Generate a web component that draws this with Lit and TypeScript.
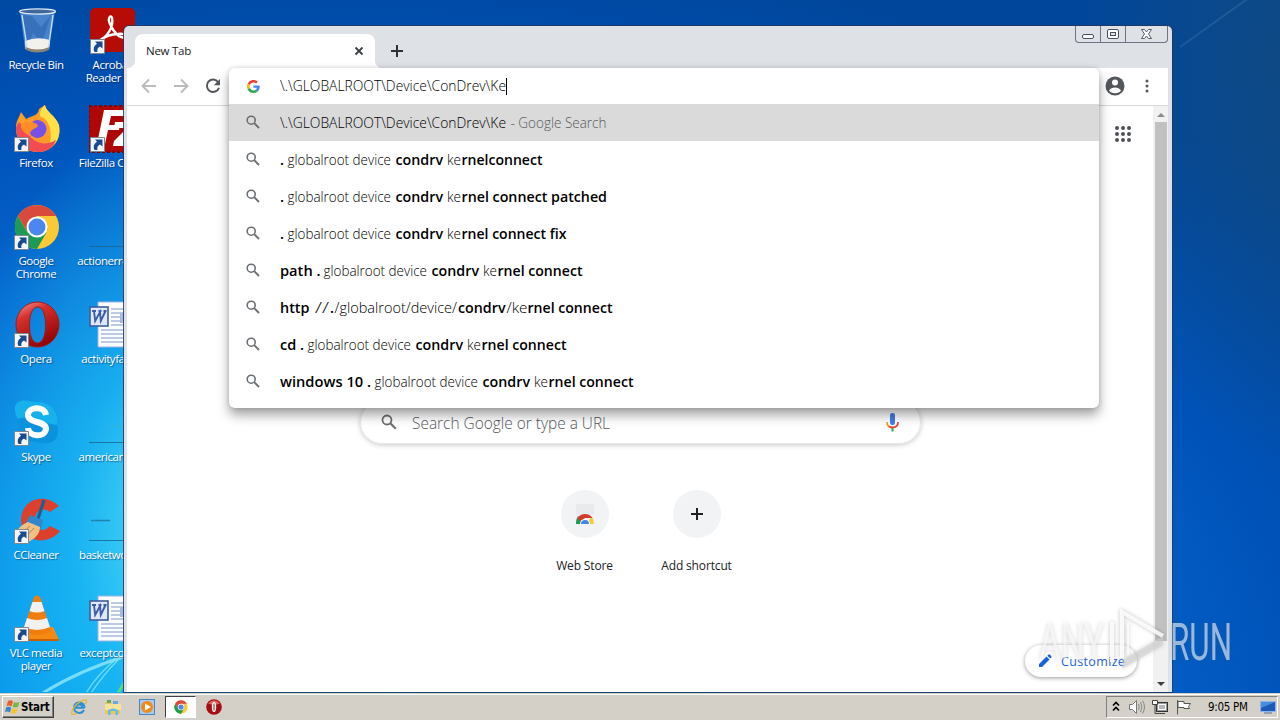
import { LitElement, html, css, svg, nothing } from 'lit'

type Part = { t: string; x: number; w: number; kind?: 'bold' | 'dim' }

// "globalroot device condrv ke…" is shared by most of the suggestions
const query = (x: number, tail: string, w: number): Part[] => [
  { t: 'globalroot device', x, w: 103.5 },
  { t: 'condrv', x: x + 108, w: 47.5, kind: 'bold' },
  { t: 'ke', x: x + 159.5, w: 14 },
  { t: tail, x: x + 174, w, kind: 'bold' },
]

const dot: Part = { t: '.', x: 0, w: 4, kind: 'bold' }

const typed = '\\.\\GLOBALROOT\\Device\\ConDrev\\Ke'

const suggestions: Part[][] = [
  [
    { t: typed, x: 0, w: 226 },
    { t: '- Google Search', x: 230.5, w: 96, kind: 'dim' },
  ],
  [dot, ...query(7.5, 'rnelconnect', 81)],
  [dot, ...query(7.5, 'rnel connect patched', 145.5)],
  [dot, ...query(7.5, 'rnel connect fix', 105)],
  [{ t: 'path .', x: 0, w: 40.5, kind: 'bold' }, ...query(43.5, 'rnel connect', 85)],
  [
    { t: 'http', x: 0, w: 29.5, kind: 'bold' },
    { t: '//', x: 35, w: 14 },
    { t: '.', x: 50, w: 4, kind: 'bold' },
    { t: '/globalroot/device/', x: 54.5, w: 122.5 },
    { t: 'condrv', x: 178, w: 47.5, kind: 'bold' },
    { t: '/ke', x: 226.5, w: 21 },
    { t: 'rnel connect', x: 247.5, w: 85, kind: 'bold' },
  ],
  [{ t: 'cd .', x: 0, w: 24, kind: 'bold' }, ...query(27.5, 'rnel connect', 85)],
  [{ t: 'windows 10 .', x: 0, w: 91, kind: 'bold' }, ...query(94.5, 'rnel connect', 85)],
]

const magnifier = html`<svg class="magnifier" viewBox="0 0 16 16">
  <circle cx="6.2" cy="6.2" r="4" fill="none" stroke="#6b6f73" stroke-width="1.6" />
  <path d="M9.2 9.2 14 14" stroke="#6b6f73" stroke-width="1.9" />
</svg>`

const chromeShape = svg`
  <circle cx="24" cy="24" r="22" fill="#fbc934" />
  <path d="M24 13H43.1A22 22 0 0 0 4.9 13L14.5 29z" fill="#d94a3d" />
  <path d="M4.9 13A22 22 0 0 0 24 46L33.5 29.5 24 33 14.5 29.5z" fill="#1d9b55" />
  <circle cx="24" cy="24" r="10.5" fill="#fff" />
  <circle cx="24" cy="24" r="8.5" fill="#4b87ee" />`

const wordShape = svg`
  <path d="M9 1H48V46H9z" fill="#fafcff" stroke="#9db4dc" />
  <path d="M22 8H46M22 12H46M22 16H46M22 20H46M22 24H46M12 29H46M12 33H46M12 37H46M12 41H46" stroke="#7f97cc" stroke-width="1.2" />
  <path d="M31 12h14v10H31z" fill="#aab9dd" />
  <rect x="1" y="6" width="18" height="19" fill="#dfe8f8" stroke="#3d5d9e" stroke-width="1.6" />
  <path d="M3 10h4M9.500 10h3M14.500 10h3M5 10l1.200 10L11 11l.8 9L16.500 10" fill="none" stroke="#3b5ca8" stroke-width="1.900" />`

const thumbLine = svg`<path d="M0 43.500H48" stroke="#17658f" opacity=".8" />`

const shapes: Record<string, unknown> = {
  bin: svg`
    <path d="M7 4 12 42Q24 47 36 42L42 4z" fill="#6fa3dc" opacity=".65" />
    <path d="M10 8 15 38 20 26 29 36 38 8 28 20 19 9z" fill="#255ca9" opacity=".45" />
    <path d="M12 34Q24 29 37 33L36 42Q24 47 12.500 42z" fill="#f3f1ec" />
    <path d="M12.500 40Q24 45 36.500 40L36 43Q24 48 13 43z" fill="#8b8476" />
    <ellipse cx="24.500" cy="4.500" rx="18" ry="2.600" fill="#41689b" stroke="#dce9f5" stroke-width="1.3" />
    <path d="M9 8 14 40M40 8 35.500 40" stroke="#c5e0f5" stroke-width="1.3" />`,
  acrobat: svg`
    <rect x="1" y="1" width="45" height="44" rx="5" fill="#b70c06" />
    <path d="M10 34C18 30 25 20 23 11c-1-4-5 0-2 6 4 9 10 14 16 14 4-1-1-5-8-4-7 0-14 3-19 7z" fill="none" stroke="#fff" stroke-width="2.400" />`,
  firefox: svg`
    <path d="M3 22C3 16 6 13 8 7L13 14C20 10 25 11 26 4L32 0C33 7 42 10 46 20 49 36 38 47 25 47 11 47 3 37 3 22z" fill="#ff9b28" />
    <path d="M32 0C33 7 42 10 46 20 48 32 43 40 36 43 40 29 37 14 28 12 25 8 29 3 32 0z" fill="#ffe047" />
    <path d="M3 22C3 36 12 47 25 47 35 47 41 41 43 35 32 42 19 38 14 26L6 17z" fill="#f24b53" />
    <circle cx="24.500" cy="24" r="9" fill="#7750e6" />
    <path d="M8 19C16 15 21 17 25 20 25 24 16 23 17 31 10 28 7 23 8 19z" fill="#ff8d26" />`,
  filezilla: svg`
    <rect x="0" y="1" width="50" height="46" fill="#ae0705" stroke="#7d0806" stroke-width="2" stroke-dasharray="3 2" />
    <path d="M15 5H36L35 11H22L20 20H31L30 25H19L16 39H8zM26 17H48L46 22 34 35H46L45 41H24L25 36 38 23H25z" fill="#fff" />`,
  chrome: chromeShape,
  rule: thumbLine,
  opera: svg`
    <defs>
      <linearGradient id="operaRed" x2=".5" y2="1">
        <stop stop-color="#f5a09b" /><stop offset=".35" stop-color="#d7302b" /><stop offset="1" stop-color="#940504" />
      </linearGradient>
    </defs>
    <path fill-rule="evenodd" d="M24.500 1a21.500 22.500 0 1 0 .01 0zM24.500 6c5 0 8 7 8 18s-3 18-8 18-8-7-8-18 3-18 8-18z" fill="url(#operaRed)" stroke="#9d1d1c" />`,
  word: wordShape,
  skype: svg`
    <path d="M4 4C11-1 17 3 25 3 38 3 46 13 44 26 47 36 43 43 35 44 28 45 25 43 21 43 8 40 3 32 5 20 1 13 1 8 4 4z" fill="#0b92dc" />
    <path d="M4 4C11-1 17 3 25 3 38 3 46 13 44 26 30 25 18 15 5 20 1 13 1 8 4 4z" fill="#16b2ed" />
    <path d="M33 16C31 6 15 8 15 16 15 25 33 21 33 30 32 39 16 38 15 29" fill="none" stroke="#fff" stroke-width="6" />`,
  americand: svg`<path d="M22 27.500h8" stroke="#39b1ce" />${thumbLine}`,
  ccleaner: svg`
    <path d="M46 9C33-4 9 0 8 23 9 45 34 50 47 34L37 29C30 37 22 32 22 23 22 13 30 10 37 15z" fill="#dc3f2c" />
    <path d="M31 3 24 25" stroke="#205e91" stroke-width="3.200" />
    <path d="M17 18 30 23 28 31 13 26z" fill="#3187c7" />
    <path d="M15 25 27 30Q27 40 13 46L2 43Q2 30 15 25z" fill="#f2c083" />
    <path d="M6 39 17 29M10 43 21 31" stroke="#b9854e" />`,
  basket: svg`<path d="M2 23.500h19" stroke="#2381ad" stroke-width="1.500" />${thumbLine}`,
  vlc: svg`
    <path d="M9 32H40L46 45H3z" fill="#f58a13" />
    <path d="M3 44H46V46H3z" fill="#c96005" />
    <path d="M21 2Q24-1 27 2L38 36Q24 44 10 36z" fill="#f17d0e" />
    <path d="M19.500 7H28.500L31.500 16Q24 19 16.500 16zM14 23Q24 27 34 23L37 32Q24 38 11 32z" fill="#f3f1ee" />`,
}

interface IconData {
  shape: string
  label: string
  shortcut?: boolean
}

const icons: IconData[] = [
  { shape: 'bin', label: 'Recycle Bin' },
  { shape: 'firefox', label: 'Firefox', shortcut: true },
  { shape: 'chrome', label: 'Google\nChrome', shortcut: true },
  { shape: 'opera', label: 'Opera', shortcut: true },
  { shape: 'skype', label: 'Skype', shortcut: true },
  { shape: 'ccleaner', label: 'CCleaner', shortcut: true },
  { shape: 'vlc', label: 'VLC media\nplayer', shortcut: true },
  { shape: 'acrobat', label: 'Acrobat\nReader DC', shortcut: true },
  { shape: 'filezilla', label: 'FileZilla Client', shortcut: true },
  { shape: 'rule', label: 'actionerror.rtf' },
  { shape: 'word', label: 'activityfar.rtf' },
  { shape: 'americand', label: 'americand.rtf' },
  { shape: 'basket', label: 'basketwor.rtf' },
  { shape: 'word', label: 'exceptcon.rtf' },
]

export class DesktopIcon extends LitElement {
  static properties = { data: { attribute: false } }

  declare data: IconData

  static styles = css`
    :host {
      display: flex;
      flex-direction: column;
      align-items: center;
      gap: 3px;
    }

    .picture {
      position: relative;
      width: 48px;
      height: 48px;
    }

    .shape {
      display: block;
      width: 48px;
      height: 48px;
    }

    .arrow {
      position: absolute;
      left: 1px;
      bottom: 1px;
      width: 15px;
      height: 15px;
    }

    .label {
      margin-right: 2px;
      color: #fff;
      font: 11.5px/13px 'Open Sans', 'Noto Sans', sans-serif;
      letter-spacing: -0.45px;
      text-align: center;
      text-shadow: 1px 1px 1px rgba(0, 30, 90, 0.55);
      white-space: pre;
    }
  `

  render() {
    const { shape, label, shortcut } = this.data
    return html`
      <div class="picture">
        <svg class="shape" viewBox="0 0 48 48">${shapes[shape]}</svg>
        ${shortcut
          ? html`<svg class="arrow" viewBox="0 0 15 15">
              <path d="M.5.5h14v14H.5z" fill="#f4f6fa" stroke="#7c8794" />
              <path d="M5 2.500h7.500v7L10 7.500Q6.500 9 7.500 13H4.500Q2 8 7 4.800z" fill="#184a90" />
            </svg>`
          : nothing}
      </div>
      <div class="label">${label}</div>
    `
  }
}

customElements.define('desktop-icon', DesktopIcon)

export class BrowserWindow extends LitElement {
  static styles = css`
    :host {
      display: flex;
      flex-direction: column;
      box-sizing: border-box;
      position: relative;
      background: #dee1e6;
      border-radius: 5px 5px 0 0;
      box-shadow: 0 0 0 1px rgba(35, 55, 95, 0.85);
      padding: 0 4px 0 3px;
      font-family: 'Open Sans', 'Noto Sans', sans-serif;
      color: #202124;
    }

    .tabs {
      display: flex;
      align-items: flex-end;
      height: 42px;
      padding-left: 8px;
      box-sizing: border-box;
    }

    .tab {
      position: relative;
      box-sizing: border-box;
      display: flex;
      align-items: center;
      justify-content: space-between;
      width: 240px;
      height: 34px;
      padding: 0 11px 1px;
      background: #fff;
      border-radius: 8px 8px 0 0;
      font-size: 11.5px;
      letter-spacing: -0.25px;
    }

    .tab::before,
    .tab::after {
      content: '';
      position: absolute;
      bottom: 0;
      width: 8px;
      height: 8px;
    }

    .tab::before {
      right: 100%;
      background: radial-gradient(circle at 0 0, transparent 8px, #fff 8.5px);
    }

    .tab::after {
      left: 100%;
      background: radial-gradient(circle at 100% 0, transparent 8px, #fff 8.5px);
    }

    .close {
      width: 10px;
      height: 10px;
    }

    .plus {
      width: 14px;
      height: 14px;
      margin: 0 0 10px 15px;
    }

    .controls {
      align-self: flex-start;
      display: flex;
      border: 1px solid #6d7583;
      border-top: 0;
      border-radius: 0 0 4px 4px;
      margin-left: auto;
    }

    .controls svg {
      display: block;
      width: 24px;
      height: 16px;
      border-right: 1px solid #6d7583;
    }

    .controls svg:last-child {
      width: 41px;
      border: 0;
    }

    .toolbar {
      box-sizing: border-box;
      display: flex;
      align-items: center;
      height: 38px;
      padding: 0 13px 2px 14px;
      background: #fff;
      border-bottom: 1px solid #d6d8da;
    }

    .toolbar svg {
      flex: none;
      width: 16px;
      height: 16px;
      margin-right: 16px;
    }

    .toolbar svg.avatar {
      width: 20px;
      height: 20px;
      margin: 0 14px 0 auto;
    }

    .toolbar svg.dots {
      margin: 0;
    }

    .page {
      flex: 1;
      display: flex;
      background: #fff;
    }

    .content {
      flex: 1;
      display: flex;
      flex-direction: column;
      align-items: center;
      position: relative;
      padding-top: 294px;
    }

    .apps {
      position: absolute;
      top: 19px;
      right: 21px;
      width: 18px;
      height: 18px;
    }

    .search {
      box-sizing: border-box;
      display: flex;
      align-items: center;
      width: 561px;
      height: 44px;
      padding: 0 20px 0 19px;
      border: 1px solid #e8e8e8;
      border-radius: 22px;
      box-shadow: 0 1px 5px rgba(32, 33, 36, 0.25);
    }

    .search .magnifier {
      width: 18px;
      height: 18px;
    }

    .placeholder {
      width: 240px;
      height: 24px;
      margin-left: 14px;
    }

    .placeholder text {
      font-size: 15.5px;
      font-weight: 300;
      fill: #55595e;
    }

    .mic {
      width: 15px;
      height: 20px;
      margin-left: auto;
    }

    .tiles {
      display: flex;
      margin: 46px 0 0 1px;
    }

    .tile {
      display: flex;
      flex-direction: column;
      align-items: center;
      width: 112px;
      gap: 20px;
      font-size: 12px;
      line-height: 16px;
      letter-spacing: -0.15px;
    }

    .disc {
      display: flex;
      align-items: center;
      justify-content: center;
      width: 48px;
      height: 48px;
      border-radius: 50%;
      background: #f1f3f4;
    }

    .customize {
      position: absolute;
      right: 16px;
      bottom: 15px;
      box-sizing: border-box;
      display: flex;
      align-items: center;
      gap: 9px;
      width: 112px;
      height: 32px;
      padding-left: 13px;
      border-radius: 16px;
      background: #fff;
      box-shadow: 0 1px 4px rgba(0, 0, 0, 0.4);
      color: #1a62d8;
      font-size: 12.5px;
      letter-spacing: 0.35px;
    }

    .customize svg {
      width: 14px;
      height: 14px;
    }

    .scrollbar {
      display: flex;
      flex-direction: column;
      align-items: center;
      width: 15px;
      background: #f1f1f1;
    }

    .scrollbar svg {
      width: 15px;
      height: 16px;
    }

    .thumb {
      flex: none;
      width: 12px;
      height: 519px;
      margin-bottom: auto;
      background: #c1c1c1;
    }

    .omnibox {
      position: absolute;
      left: 105px;
      top: 42px;
      box-sizing: border-box;
      width: 870px;
      height: 340px;
      background: #fff;
      border-radius: 6px;
      box-shadow: 0 7px 12px rgba(0, 0, 0, 0.36), 0 0 5px rgba(0, 0, 0, 0.14);
    }

    .row {
      display: flex;
      align-items: center;
      gap: 18px;
      height: 37px;
      padding-left: 16px;
    }

    .row.input {
      height: 36px;
    }

    .row.selected {
      background: #dadada;
    }

    .row .magnifier {
      width: 16px;
      height: 16px;
      margin: 0 1px 2px 0;
    }

    .row .google {
      width: 13px;
      height: 13px;
      margin: 0 2px 0;
    }

    .line {
      align-self: flex-start;
      width: 500px;
      height: 36px;
      overflow: visible;
    }

    text {
      font-size: 14.5px;
      font-weight: 300;
      fill: #000;
      white-space: pre;
    }

    .bold {
      font-weight: 600;
    }

    .dim {
      fill: #55595c;
    }
  `

  line(parts: Part[], y = 24, caret = false) {
    return html`<svg class="line" viewBox="0 0 500 36">
      <text y=${y}>
        ${parts.map(
          (p) => svg`<tspan class=${p.kind ?? 'plain'} x=${p.x} textLength=${p.w} lengthAdjust="spacingAndGlyphs">${p.t}</tspan>`
        )}
      </text>
      ${caret ? svg`<path d="M226.500 10v17" stroke="#000" />` : nothing}
    </svg>`
  }

  render() {
    return html`
      <div class="tabs">
        <div class="tab">
          New Tab
          <svg class="close" viewBox="0 0 10 10"><path d="M1.500 1.500l7 7m0-7l-7 7" stroke="#3c4043" stroke-width="1.800" /></svg>
        </div>
        <svg class="plus" viewBox="0 0 14 14"><path d="M7 1v12M1 7h12" stroke="#2f3237" stroke-width="2" /></svg>
        <div class="controls">
          <svg viewBox="0 0 24 16"><rect x="6.500" y="8.500" width="11" height="4" rx="1.500" fill="#fff" stroke="#4b5060" /></svg>
          <svg viewBox="0 0 24 16">
            <rect x="6.500" y="3.500" width="11" height="9" rx="1.500" fill="#fff" stroke="#4b5060" />
            <rect x="9.500" y="6.500" width="5" height="3" fill="#dee1e6" stroke="#4b5060" />
          </svg>
          <svg viewBox="0 0 41 16">
            <path d="M15.500 3.500h3l2 2.500 2-2.500h3L22.500 8l3 4.500h-3l-2-2.500-2 2.500h-3l3-4.500z" fill="#fff" stroke="#5a5f6b" />
          </svg>
        </div>
      </div>
      <div class="toolbar">
        <svg viewBox="0 0 16 16"><path d="M15 8H2M8 1.500 1.500 8 8 14.500" fill="none" stroke="#b9bbbd" stroke-width="1.900" /></svg>
        <svg viewBox="0 0 16 16"><path d="M1 8h13M8 1.500 14.500 8 8 14.500" fill="none" stroke="#b9bbbd" stroke-width="1.900" /></svg>
        <svg viewBox="0 0 16 16">
          <path d="M13.200 4.200A6.200 6.200 0 1 0 14 9.700" fill="none" stroke="#55595d" stroke-width="2" />
          <path d="M15 1v6.200H8.800z" fill="#55595d" />
        </svg>
        <svg class="avatar" viewBox="0 0 20 20">
          <circle cx="10" cy="10" r="9.500" fill="#53565a" />
          <circle cx="10" cy="6.500" r="3" fill="#fff" />
          <path d="M4 14.500Q6 11.500 10 11.500T16 14.500Q14 17.300 10 17.300T4 14.500z" fill="#fff" />
        </svg>
        <svg class="dots" viewBox="0 0 16 16">
          <path d="M8 3v0M8 8v0M8 13v0" stroke="#55595d" stroke-width="3" stroke-linecap="round" />
        </svg>
      </div>
      <div class="page">
        <div class="content">
          <svg class="apps" viewBox="0 0 18 18">
            <path d="M3 3v0M9 3v0M15 3v0M3 9v0M9 9v0M15 9v0M3 15v0M9 15v0M15 15v0" stroke="#4d5155" stroke-width="4" stroke-linecap="round" />
          </svg>
          <div class="search">
            ${magnifier}
            <svg class="placeholder" viewBox="0 0 240 24">
              <text y="19" textLength="198" lengthAdjust="spacingAndGlyphs">Search Google or type a URL</text>
            </svg>
            <svg class="mic" viewBox="0 0 15 20">
              <rect x="5" y="1" width="5" height="12" rx="2.200" fill="#3f7de8" />
              <path d="M2 10Q2 15.500 7.500 15.500" fill="none" stroke="#f0a029" stroke-width="1.800" />
              <path d="M4 14.300Q5.500 15.500 7.500 15.500 13 15.500 13 10" fill="none" stroke="#e2493d" stroke-width="1.800" />
              <path d="M7.500 16v3.500" stroke="#32a853" stroke-width="2" />
            </svg>
          </div>
          <div class="tiles">
            <div class="tile">
              <div class="disc">
                <svg width="20" height="20" viewBox="0 0 20 20">
                  <path d="M1 0h18v11H1z" fill="#e9eaeb" />
                  <path d="M1 20A9 11 0 0 1 3 12L10 20z" fill="#1d9b55" />
                  <path d="M19 20A9 11 0 0 0 17 13L10 20z" fill="#fbc934" />
                  <path d="M2.500 14A9 9 0 0 1 17.500 14H10L6 18z" fill="#d33b2d" />
                  <path d="M5 20a5 5.200 0 0 1 10 0z" fill="#fff" />
                  <path d="M6 20a4 4 0 0 1 8 0z" fill="#4285f4" />
                </svg>
              </div>
              Web Store
            </div>
            <div class="tile">
              <div class="disc">
                <svg width="14" height="14" viewBox="0 0 14 14"><path d="M7 1v12M1 7h12" stroke="#202124" stroke-width="2" /></svg>
              </div>
              Add shortcut
            </div>
          </div>
          <div class="customize">
            <svg viewBox="0 0 14 14"><path d="M1 13v-3L8.500 2.500l3 3L4 13zM9.300 1.700 10.500.6q.7-.5 1.400.1l1.400 1.400q.6.700 0 1.300l-1 1.200z" fill="#1a62e0" /></svg>
            Customize
          </div>
        </div>
        <div class="scrollbar">
          <svg viewBox="0 0 15 16"><path d="M4 11h8L8 7z" fill="#8b8b8b" /></svg>
          <div class="thumb"></div>
          <svg viewBox="0 0 15 16"><path d="M4 6h8L8 10z" fill="#404040" /></svg>
        </div>
      </div>
      <div class="omnibox">
        <div class="row input">
          <svg class="google" viewBox="0 0 48 48">
            <path d="M24 9.500c3.500 0 6.700 1.200 9.200 3.600l6.900-6.900A24 24 0 0 0 2.600 13.200l8 6.200C12.400 13.700 17.700 9.500 24 9.500z" fill="#ea4335" />
            <path d="M47 24.500c0-1.600-.2-3.100-.4-4.500H24v9h12.900a11 11 0 0 1-4.700 7.200l7.700 6C44.400 38 47 31.800 47 24.500z" fill="#4285f4" />
            <path d="M10.500 28.600a14 14 0 0 1 0-9.200l-8-6.200a24 24 0 0 0 0 21.600z" fill="#fbbc05" />
            <path d="M24 48c6.500 0 11.900-2.100 15.900-5.800l-7.700-6c-2.200 1.500-4.900 2.300-8.200 2.300-6.300 0-11.600-4.200-13.500-9.900l-8 6.200A24 24 0 0 0 24 48z" fill="#34a853" />
          </svg>
          ${this.line([{ t: typed, x: 0, w: 226 }], 23, true)}
        </div>
        ${suggestions.map(
          (parts, i) => html`<div class="row ${i === 0 ? 'selected' : ''}">${magnifier} ${this.line(parts)}</div>`
        )}
      </div>
    `
  }
}

customElements.define('browser-window', BrowserWindow)

export class TaskBar extends LitElement {
  static styles = css`
    :host {
      display: flex;
      align-items: center;
      box-sizing: border-box;
      height: 28px;
      padding: 1px 2px;
      background: #d4d0c8;
      border-top: 1px solid #d4d0c8;
      box-shadow: inset 0 1px #fff;
      font-family: 'DejaVu Sans Condensed', 'Noto Sans', sans-serif;
      color: #000;
    }

    .start {
      box-sizing: border-box;
      display: flex;
      align-items: center;
      gap: 1px;
      width: 52px;
      height: 22px;
      padding-left: 2px;
      border: 1px solid;
      border-color: #fff #404040 #404040 #fff;
      box-shadow: inset -1px -1px #808080;
      font-size: 11.5px;
      font-weight: bold;
      letter-spacing: -0.2px;
    }

    .start svg {
      width: 15px;
      height: 16px;
    }

    .quick {
      display: flex;
      align-items: center;
      margin-left: 8px;
    }

    .item {
      box-sizing: border-box;
      display: flex;
      align-items: center;
      justify-content: center;
      width: 34px;
      height: 22px;
    }

    .active {
      width: 31px;
      margin: 0 1px;
      background: #fff;
      border: 1px solid;
      border-color: #404040 #fff #fff #404040;
    }

    .item svg {
      width: 16px;
      height: 16px;
    }

    .active svg {
      width: 14px;
      height: 14px;
    }

    .tray {
      box-sizing: border-box;
      display: flex;
      align-items: center;
      width: 172px;
      height: 22px;
      margin-left: auto;
      padding: 0 1px 0 5px;
      border: 1px solid;
      border-color: #808080 #fff #fff #808080;
      font-size: 11.5px;
      letter-spacing: -0.3px;
    }

    .tray svg {
      height: 16px;
      flex: none;
    }

    .sound {
      margin-left: 8px;
    }

    .network {
      margin-left: 6px;
    }

    .flag {
      margin-left: 8px;
    }

    .time {
      margin: 0 auto 0 16px;
      white-space: nowrap;
    }
  `

  render() {
    return html`
      <div class="start">
        <svg viewBox="0 0 15 16">
          <path d="M3 2Q6 .5 8 2.500L6.500 7.500Q4 6 1.500 7z" fill="#e9602f" />
          <path d="M9 3Q11 4.500 14.500 3L13 8Q10 9 7.500 7.800z" fill="#78b943" />
          <path d="M1.200 8.200Q4 7 6.200 8.700L5 13.500Q3 12 0 13z" fill="#3c83cf" />
          <path d="M7.200 9Q9.500 10.500 12.700 9.200L11.300 14Q8.500 15.500 5.800 14z" fill="#f4c52f" />
        </svg>
        Start
      </div>
      <div class="quick">
        <div class="item">
          <svg viewBox="0 0 16 16">
            <path d="M13.500 8.700H5Q5.500 5.500 8.500 5.500T11 8.500M13 11Q11.500 14 8.300 14 3 13.500 3 8.500 3.500 3.500 8.500 3.500 13.500 4 13.500 9" fill="none" stroke="#2f8fd4" stroke-width="2" />
            <path d="M15.500 1Q12 0 6 5 0 11 .7 15 2 16.500 5.500 14M15.500 1Q16 3 14 5" fill="none" stroke="#e3b72c" stroke-width="1.200" />
          </svg>
        </div>
        <div class="item">
          <svg viewBox="0 0 16 16">
            <path d="M0 3h6l1 2h8v10H0z" fill="#e8c65e" />
            <path d="M2 1h4v3H2z" fill="#60ae5b" />
            <path d="M8 2h5v3H8z" fill="#6aa9d8" />
            <path d="M0 5h16v6H0z" fill="#f8e49b" />
            <path d="M3 16V11Q8 8 13 11v5h-2.500V12h-5v4z" fill="#66bde2" />
          </svg>
        </div>
        <div class="item">
          <svg viewBox="0 0 16 16">
            <rect x=".5" y=".5" width="15" height="15" fill="#a6cbee" stroke="#4686c4" />
            <circle cx="8" cy="8" r="6" fill="#f38718" />
            <path d="M6 4.500 12 8l-6 3.500z" fill="#fff" />
          </svg>
        </div>
        <div class="item active"><svg viewBox="1 1 46 46">${chromeShape}</svg></div>
        <div class="item">
          <svg viewBox="0 0 16 16">
            <circle cx="8" cy="8" r="7.800" fill="#a60d12" />
            <path d="M2 4.500Q8-2 14 4.500 8 7 2 4.500z" fill="#d9645e" />
            <ellipse cx="8" cy="8" rx="2.200" ry="5" fill="#fff" />
            <path d="M8 4.500v7" stroke="#a60d12" />
          </svg>
        </div>
      </div>
      <div class="tray">
        <svg width="8" viewBox="0 0 8 16"><path d="M1 6.500 4 3.500l3 3M1 11.500l3-3 3 3" fill="none" stroke="#000" stroke-width="1.600" /></svg>
        <svg class="sound" width="18" viewBox="0 0 18 16">
          <path d="M1.500 5.500h3l4-4v13l-4-4h-3z" fill="#fff" stroke="#777" />
          <path d="M10.500 5q1.500 3 0 6M12.500 3q3 5 0 10M14.500 1.500q4 6.500 0 13" fill="none" stroke="#888" />
        </svg>
        <svg class="network" width="16" viewBox="0 0 16 16">
          <rect x="4.500" y="3.500" width="11" height="9" fill="#999" stroke="#333" />
          <path d="M6.500 5.500h7v5h-7z" fill="#b5b5b5" stroke="#fff" />
          <path d="M.5 1.500h5v4h-5z" fill="#fff" stroke="#444" />
          <path d="M3 6v8.500h10" fill="none" stroke="#444" />
        </svg>
        <svg class="flag" width="16" viewBox="0 0 16 16">
          <path d="M1.500 1v14.500M2 2.500h6v2h6.500l-2 3 1 2H8V8.500H2z" fill="#fff" stroke="#555" />
        </svg>
        <div class="time">9:05 PM</div>
        <svg width="16" viewBox="0 0 16 16">
          <path d="M.5 2.500h15v10H.5z" fill="#1e59b8" stroke="#8bb5e8" />
          <path d="M1 3h14L1 9z" fill="#4c8cdd" />
          <path d="M4 14h8" stroke="#536e96" />
        </svg>
      </div>
    `
  }
}

customElements.define('task-bar', TaskBar)

export class AppRoot extends LitElement {
  static styles = css`
    :host {
      display: flex;
      flex-direction: column;
      position: relative;
      width: 1280px;
      height: 720px;
      overflow: hidden;
    }

    .desktop {
      flex: 1;
      position: relative;
      background: radial-gradient(ellipse 260px 420px at 190px 530px, #5be3f8 0, rgba(30, 190, 245, 0.75) 45%, transparent 100%),
        radial-gradient(ellipse 260px 420px at 1330px 60px, rgba(20, 75, 125, 0.9), transparent),
        radial-gradient(ellipse 1250px 760px at 330px 690px, #03a9f4 0, #0595ec 22%, #0569d2 55%, #0052b8 78%, #00469b 100%);
    }

    .rays {
      position: absolute;
      inset: 0;
      width: 1280px;
      height: 692px;
    }

    .icons {
      display: grid;
      grid-template-rows: repeat(7, 98px);
      grid-auto-columns: 76px;
      grid-auto-flow: column;
      justify-content: start;
      padding-top: 7px;
      margin-left: -1px;
    }

    .icons desktop-icon {
      position: relative;
    }

    .window {
      position: absolute;
      left: 124px;
      top: 26px;
      width: 1048px;
      height: 666px;
    }

    .watermark {
      position: absolute;
      left: 1030px;
      top: 600px;
      width: 230px;
      height: 80px;
      overflow: visible;
      filter: drop-shadow(0 0 2px rgba(80, 80, 80, 0.4));
    }

    .watermark text {
      font: 400 52px Roboto, 'Liberation Sans', sans-serif;
      fill: rgba(255, 255, 255, 0.58);
    }
  `

  render() {
    return html`
      <div class="desktop">
        <svg class="rays" viewBox="0 0 1280 692">
          <path d="M43 693Q78 671 126 656" fill="none" stroke="#9aeef8" stroke-width="3" opacity=".75" />
          <path d="M86 693Q98 674 114 661M91 693Q104 674 118 660" fill="none" stroke="#9aeef8" stroke-width="1.200" opacity=".7" />
          <path d="M118 693l8-13" stroke="#55dc87" stroke-width="3" />
          <path d="M1180 47 1250-3" stroke="#6fa0cf" stroke-width="2" opacity=".2" />
        </svg>
        <div class="icons">${icons.map((data) => html`<desktop-icon .data=${data}></desktop-icon>`)}</div>
        <browser-window class="window"></browser-window>
      </div>
      <task-bar></task-bar>
      <svg class="watermark" viewBox="0 0 230 80">
        <text x="9" y="60" textLength="65" lengthAdjust="spacingAndGlyphs">ANY</text>
        <text x="140" y="60" textLength="62" lengthAdjust="spacingAndGlyphs">RUN</text>
        <path d="M82 62V22M92 58V12L133 36" fill="none" stroke="#fff" stroke-width="4" opacity=".85" />
        <path d="M98 23v32" stroke="#fff" stroke-width="2" opacity=".7" />
        <path d="M92 60 133 36v9L92 69z" fill="#d4d4d4" opacity=".55" />
      </svg>
    `
  }
}

customElements.define('app-root', AppRoot)
